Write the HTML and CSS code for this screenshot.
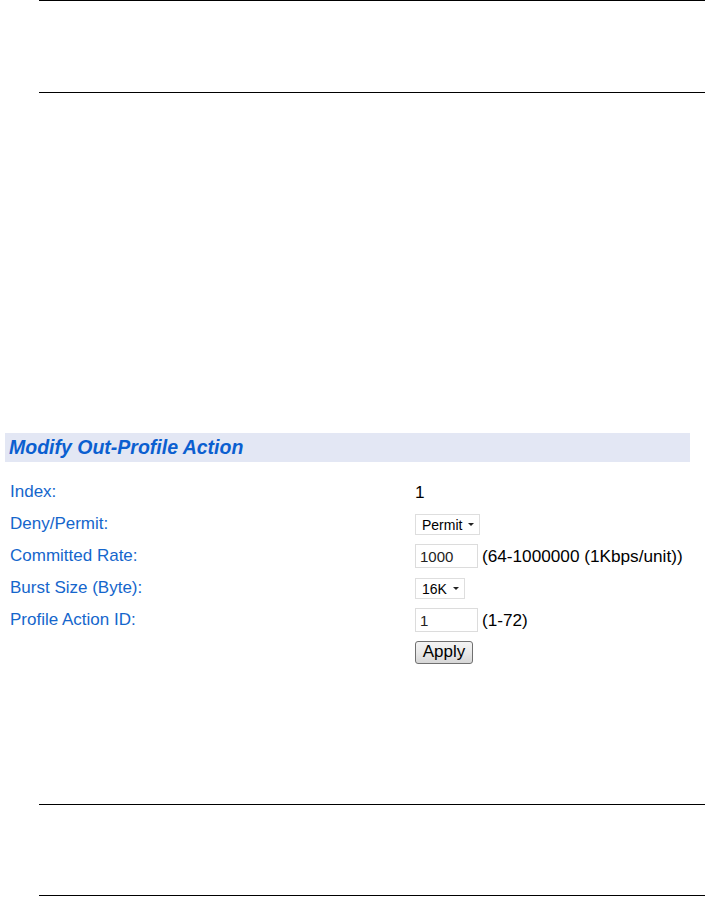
FILE: index.html
```html
<!DOCTYPE html>
<html lang="en">

<head>
    <meta charset="UTF-8" />
    <meta name="viewport" content="width=device-width, initial-scale=1.0">
    <title>Modify Out-Profile Action</title>
    <link rel="stylesheet" href="styles.css">
</head>

<body>
    <div class="rule-box"></div>

    <div class="panel">
        <h2 class="panel-title">Modify Out-Profile Action</h2>

        <div class="form-grid">
            <div class="label">Index:</div>
            <div class="value">1</div>

            <div class="label">Deny/Permit:</div>
            <div class="value">
                <span class="pick pick-wide">
                    <select>
                        <option>Permit</option>
                        <option>Deny</option>
                    </select>
                </span>
            </div>

            <div class="label">Committed Rate:</div>
            <div class="value">
                <input type="text" value="1000" />
                <span class="hint">(64-1000000 (1Kbps/unit))</span>
            </div>

            <div class="label">Burst Size (Byte):</div>
            <div class="value">
                <span class="pick pick-narrow">
                    <select>
                        <option>16K</option>
                        <option>32K</option>
                        <option>64K</option>
                    </select>
                </span>
            </div>

            <div class="label">Profile Action ID:</div>
            <div class="value">
                <input type="text" value="1" />
                <span class="hint">(1-72)</span>
            </div>

            <div class="label"></div>
            <div class="value">
                <button type="button">Apply</button>
            </div>
        </div>
    </div>

    <div class="rule-box rule-box-bottom"></div>
</body>

</html>
```

FILE: styles.css
```css
body {
    margin: 0;
    background: #fff;
    font-family: 'Liberation Sans', Arial, sans-serif;
}

.rule-box {
    margin-left: 39px;
    height: 91px;
    border-top: 1px solid #000;
    border-bottom: 1px solid #000;
}

.rule-box-bottom {
    margin-top: 136px;
    height: 90px;
}

.panel {
    margin: 340px 0 0 5px;
    width: 685px;
}

.panel-title {
    margin: 0;
    height: 29px;
    line-height: 29px;
    padding-left: 4px;
    background: #e3e7f4;
    color: #0b5fd0;
    font-size: 19.5px;
    font-weight: bold;
    font-style: italic;
}

.form-grid {
    display: grid;
    grid-template-columns: 405px 1fr;
    grid-auto-rows: 32px;
    margin-top: 14px;
    padding-left: 5px;
}

.label,
.value {
    display: flex;
    align-items: center;
}

.label {
    color: #1566cc;
    font-size: 17px;
}

.value {
    color: #000;
    font-size: 17.2px;
    gap: 4px;
}

.pick {
    position: relative;
    display: inline-block;
    height: 21px;
}

.pick select {
    appearance: none;
    -webkit-appearance: none;
    height: 21px;
    padding: 0 0 0 6px;
    border: 1px solid #dedede;
    border-radius: 0;
    background: #fff;
    color: #000;
    font-family: 'Liberation Sans', Arial, sans-serif;
    font-size: 14px;
    outline: none;
}

.pick::after {
    content: "";
    position: absolute;
    right: 6px;
    top: 9px;
    border-left: 3px solid transparent;
    border-right: 3px solid transparent;
    border-top: 3px solid #222;
    pointer-events: none;
}

.pick-wide select {
    width: 65px;
}

.pick-narrow select {
    width: 50px;
}

input[type=text] {
    box-sizing: border-box;
    width: 63px;
    height: 24px;
    padding: 0 4px;
    margin: 0;
    border: 1px solid #dcdcdc;
    color: #222;
    font-family: 'Liberation Sans', Arial, sans-serif;
    font-size: 15px;
    outline: none;
}

.hint {
    white-space: nowrap;
}

button {
    box-sizing: border-box;
    width: 58px;
    height: 23px;
    padding: 0;
    border: 1px solid #707070;
    border-radius: 3px;
    background: linear-gradient(#f4f4f4 0%, #e9e9e9 50%, #d6d6d6 100%);
    color: #000;
    font-family: 'Liberation Sans', Arial, sans-serif;
    font-size: 17px;
    cursor: pointer;
}
```
